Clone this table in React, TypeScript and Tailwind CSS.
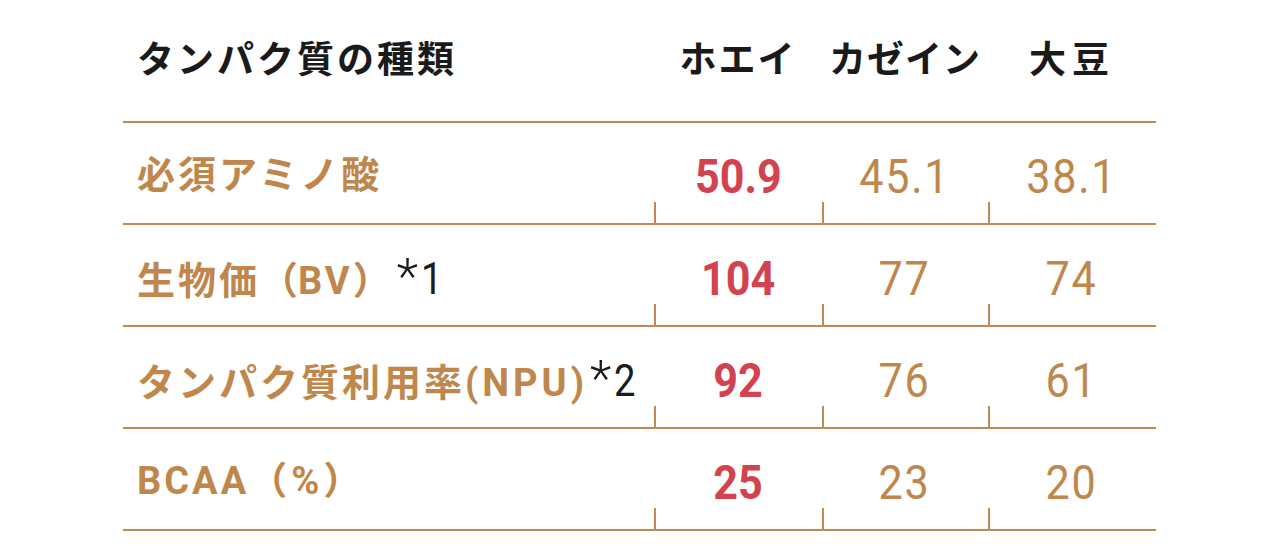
import React from 'react';

interface Row {
  label: React.ReactNode;
  whey: string;
  casein: string;
  soy: string;
}

const Note: React.FC<{ n: string; gap: string }> = ({ n, gap }) => (
  <span className={`text-[#1a1a1a] tracking-normal ${gap} inline-flex items-baseline`}>
    <span className="text-[50px] font-light leading-none">*</span>
    <span className="ml-[3px] inline-block scale-x-[0.85] origin-left text-[45px] font-normal leading-none">{n}</span>
  </span>
);

const rows: Row[] = [
  { label: <span>必須アミノ酸</span>, whey: '50.9', casein: '45.1', soy: '38.1' },
  {
    label: (
      <span className="inline-flex items-baseline">
        生物価<span className="tracking-normal">（</span>BV<span className="tracking-normal">）</span>
        <Note n="1" gap="ml-[6px]" />
      </span>
    ),
    whey: '104',
    casein: '77',
    soy: '74',
  },
  {
    label: (
      <span className="inline-flex items-baseline">
        タンパク質利用率<span className="tracking-[4px]">(NPU)</span>
        <Note n="2" gap="ml-[2px]" />
      </span>
    ),
    whey: '92',
    casein: '76',
    soy: '61',
  },
  {
    label: (
      <span>
        BCAA<span className="tracking-[4px]">（%）</span>
      </span>
    ),
    whey: '25',
    casein: '23',
    soy: '20',
  },
];

const NumCell: React.FC<{ value: string; highlight?: boolean }> = ({ value, highlight }) => (
  <div className="flex flex-col justify-between pt-[29px]">
    <div className="flex justify-center h-[48px]">
      <span
        className={`inline-block scale-x-[0.88] text-[49px] leading-none font-['Roboto',sans-serif] ${
          highlight ? 'font-bold text-[#d2434f]' : 'font-normal tracking-[2px] text-[#bf874c]'
        }`}
      >
        {value}
      </span>
    </div>
    <div className="h-[21px] w-0 border-l-2 border-[#c08a55]" />
  </div>
);

const App: React.FC = () => {
  return (
    <div className="w-[1280px] h-[560px] bg-white pl-[123px] font-['Roboto','Noto_Sans_CJK_JP',sans-serif]">
      <div className="w-[1033px]">
        {/* Header */}
        <div className="grid grid-cols-[531px_168px_166px_168px] h-[123px] border-b-2 border-[#c08a55] items-center text-[#1a1a1a] font-bold text-[37px] leading-none">
          <div className="pl-[14px] tracking-[3px]">タンパク質の種類</div>
          <div className="text-center tracking-[2px]">ホエイ</div>
          <div className="text-center tracking-[1px]">カゼイン</div>
          <div className="text-center tracking-[6px]">大豆</div>
        </div>
        {/* Rows */}
        {rows.map((row, i) => (
          <div
            key={i}
            className="grid grid-cols-[531px_168px_166px_168px] h-[102px] border-b-2 border-[#c08a55]"
          >
            <div className="flex items-center pl-[14px] pt-[4px] text-[38px] leading-none font-bold text-[#bf874c] tracking-[3px]">
              {row.label}
            </div>
            <NumCell value={row.whey} highlight />
            <NumCell value={row.casein} />
            <NumCell value={row.soy} />
          </div>
        ))}
      </div>
    </div>
  );
};

export default App;
